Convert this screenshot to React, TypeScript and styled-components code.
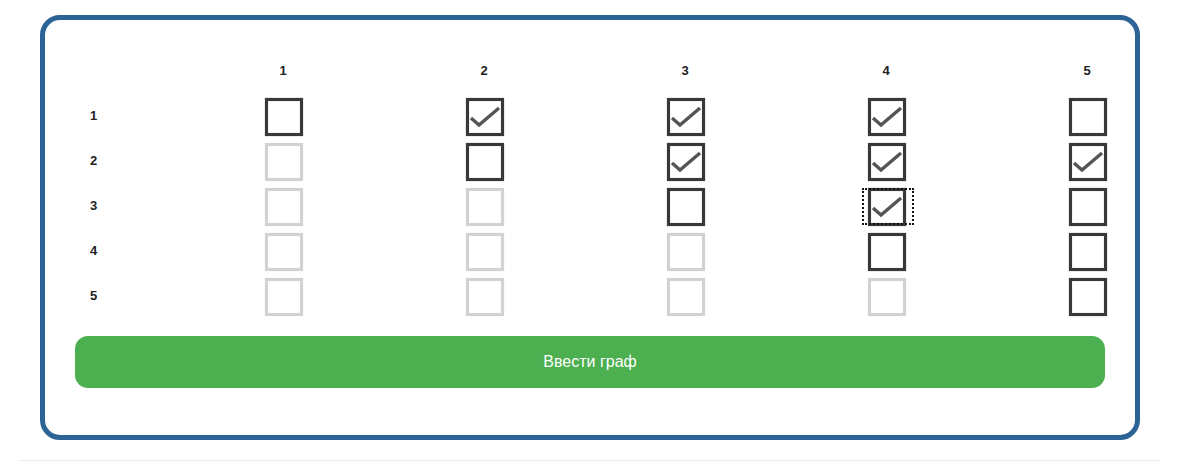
import React from "react";
import styled, { createGlobalStyle, css } from "styled-components";

const GlobalStyle = createGlobalStyle`
  html, body {
    margin: 0;
    padding: 0;
    background: #ffffff;
    font-family: "Liberation Sans", Arial, sans-serif;
  }
`;

const Page = styled.div`
  width: 1140px;
  margin-left: 20px;
  padding-top: 15px;
  padding-bottom: 20px;
  border-bottom: 1px solid #ebebeb;
`;

const Card = styled.div`
  margin-left: 20px;
  width: 1100px;
  box-sizing: border-box;
  border: 5px solid #2c6496;
  border-radius: 20px;
  padding: 30px 30px 47px 30px;
  background: #fff;
`;

const Matrix = styled.div`
  display: grid;
  grid-template-columns: 27px repeat(5, 38px);
  grid-template-rows: 41px repeat(5, 38px);
  column-gap: 163px;
  row-gap: 7px;
`;

const HeadCell = styled.div`
  display: flex;
  align-items: center;
  justify-content: center;
  margin-left: -2px;
  font-size: 13px;
  font-weight: bold;
  color: #222;
`;

const RowLabel = styled.div`
  display: flex;
  align-items: center;
  padding-left: 15px;
  margin-top: -4px;
  font-size: 13px;
  font-weight: bold;
  color: #222;
`;

const Box = styled.div<{ $disabled?: boolean; $focused?: boolean }>`
  position: relative;
  width: 38px;
  height: 38px;
  box-sizing: border-box;
  border: 3px solid ${(p) => (p.$disabled ? "#d2d2d2" : "#383838")};
  box-shadow: 0 0 1px ${(p) => (p.$disabled ? "#e4e4e4" : "#888")},
    inset 0 0 1px ${(p) => (p.$disabled ? "#e4e4e4" : "#888")};
  background: #fff;
  display: flex;
  align-items: center;
  justify-content: center;
  ${(p) =>
    p.$focused &&
    css`
      &::after {
        content: "";
        position: absolute;
        left: -9px;
        right: -11px;
        top: -3px;
        bottom: -2px;
        border: 2px dotted #111;
        border-top-color: transparent;
      }
      &::before {
        content: "";
        position: absolute;
        left: -9px;
        right: -11px;
        top: -3px;
        height: 0;
        border-top: 2px dotted #111;
      }
    `}
`;

const Button = styled.button`
  display: block;
  width: 100%;
  height: 52px;
  margin-top: 20px;
  border: none;
  border-radius: 13px;
  background: #4caf50;
  color: #fff;
  font-family: "Liberation Sans", Arial, sans-serif;
  font-size: 16px;
  cursor: pointer;
`;

const Check = () => (
  <svg width="32" height="32" viewBox="0 0 32 32" style={{ marginLeft: -1 }}>
    <path
      d="M2 17 L10 24 L30 7"
      fill="none"
      stroke="#555"
      strokeWidth="3.4"
      strokeLinejoin="miter"
    />
  </svg>
);

const checked = new Set(["1-2", "1-3", "1-4", "2-3", "2-4", "2-5", "3-4"]);
const idx = [1, 2, 3, 4, 5];

export default function App() {
  return (
    <>
      <GlobalStyle />
      <Page>
        <Card>
          <Matrix>
            <div />
            {idx.map((c) => (
              <HeadCell key={c}>{c}</HeadCell>
            ))}
            {idx.map((r) => (
              <React.Fragment key={r}>
                <RowLabel>{r}</RowLabel>
                {idx.map((c) => (
                  <Box
                    key={c}
                    $disabled={c < r}
                    $focused={r === 3 && c === 4}
                  >
                    {checked.has(`${r}-${c}`) && <Check />}
                  </Box>
                ))}
              </React.Fragment>
            ))}
          </Matrix>
          <Button>Ввести граф</Button>
        </Card>
      </Page>
    </>
  );
}
